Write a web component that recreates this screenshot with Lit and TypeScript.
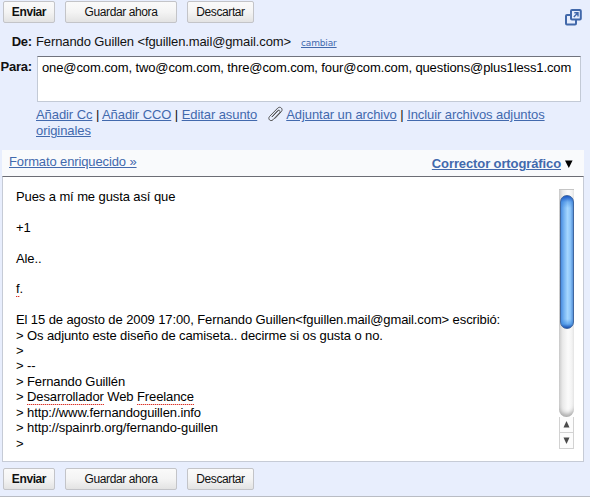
import { LitElement, html, css } from "lit";
import { customElement, property } from "lit/decorators.js";

@customElement("action-bar")
class ActionBar extends LitElement {
  static styles = css`
    :host { display: flex; gap: 10px; padding-left: 3px; }
    button {
      box-sizing: border-box; height: 22px; margin: 0; padding: 1px 0 0;
      border: 1px solid #c3c4c8; border-radius: 2px;
      background: linear-gradient(#fafafa, #f4f4f4 50%, #e3e3e3);
      font: 12px/19px "Liberation Sans", Arial, sans-serif; color: #111;
      white-space: nowrap;
    }
    .send { width: 52px; font-weight: bold; letter-spacing: -0.4px; }
    .save { width: 112px; letter-spacing: -0.4px; }
    .drop { width: 67px; letter-spacing: -0.4px; }
  `;
  render() {
    return html`
      <button class="send">Enviar</button>
      <button class="save">Guardar ahora</button>
      <button class="drop">Descartar</button>`;
  }
}

@customElement("message-editor")
class MessageEditor extends LitElement {
  @property({ attribute: false }) lines: unknown[] = [];
  static styles = css`
    :host {
      box-sizing: border-box; display: flex; justify-content: space-between;
      width: 582px; height: 286px; padding: 12px 9px 0 13px; background: #fff;
      border: 1px solid #c6cbd6; border-top-color: #6c6d75;
    }
    .text { font-size: 13px; line-height: 15.42px; letter-spacing: -0.1px; color: #000; white-space: pre; }
    .line { height: 15.42px; }
    .scroll { width: 15px; height: 260px; display: flex; flex-direction: column; }
    .track {
      box-sizing: border-box; height: 228px; padding: 5px 0 0 1px; border-top: 1px solid #c5c5c5;
      border-radius: 0 0 8px 8px;
      background: linear-gradient(90deg, #cfcfcf, #eaeaea 25%, #fbfbfb 60%, #f0f0f0);
      box-shadow: inset 0 -5px 4px -2px #aaa;
    }
    .thumb {
      box-sizing: border-box; width: 14px; height: 134px; border: 1px solid #40679f; border-radius: 7px;
      background:
        linear-gradient(#1956c4, #2f7ddc66 6px, transparent 12px, transparent 123px, #3385de88 128px, #174fb0),
        linear-gradient(90deg, #4b8ee0, #75b3f2 25%, #a5d7ff 55%, #8cc5fa 78%, #5792d8);
    }
    .arrow {
      box-sizing: border-box; height: 16px; border: 1px solid #d2d2d2; border-top: 0;
      display: flex; align-items: center; justify-content: center; background: #fcfcfc;
    }
    .arrow svg { display: block; }
    .typo {
      padding-bottom: 1px;
      background: repeating-linear-gradient(90deg, #d8342c 0 1px, #f6bdb8 1px 2px) 0 100% / 100% 1px no-repeat;
    }
  `;
  render() {
    return html`
      <div class="text">${this.lines.map((l) => html`<div class="line">${l}</div>`)}</div>
      <div class="scroll">
        <div class="track"><div class="thumb"></div></div>
        <div class="arrow"><svg width="7" height="7"><path d="M3.5 0L6.5 6.5H.5z" fill="#4a4a4a"/></svg></div>
        <div class="arrow"><svg width="7" height="7"><path d="M3.5 7L6.5 .5H.5z" fill="#4a4a4a"/></svg></div>
      </div>`;
  }
}

@customElement("app-root")
class AppRoot extends LitElement {
  static styles = css`
    :host {
      box-sizing: border-box; display: block; width: 590px; height: 500px; overflow: hidden;
      background: #fff; font: 13px/16px "Liberation Sans", Arial, sans-serif; color: #111;
    }
    .compose { box-sizing: border-box; height: 497px; padding-top: 1px; background: #e8eefd; border-bottom: 1px solid #b9bcc4; }
    .top { display: flex; justify-content: space-between; height: 32px; }
    .popout { margin: 8px 8px 0 0; display: block; }
    .row { display: flex; white-space: nowrap; }
    .label { width: 32px; padding-right: 4px; text-align: right; font-weight: bold; letter-spacing: -0.2px; }
    .from { height: 22px; padding-top: 1px; }
    .from .value { width: 265px; letter-spacing: -0.11px; }
    a { color: #4269ad; text-decoration: underline; }
    .change { font: 9px/18px "DejaVu Sans", sans-serif; letter-spacing: -0.15px; }
    .to .label { padding-top: 3px; }
    .box {
      box-sizing: border-box; width: 544px; height: 46px; margin-left: 1px; padding: 3px 4px; background: #fff;
      border: 1px solid #c3cad6; border-top-color: #70737d; letter-spacing: -0.11px; color: #000;
    }
    .options { margin: 4px 0 0 36px; width: 530px; height: 44px; line-height: 16px; letter-spacing: -0.08px; white-space: nowrap; }
    .clip { display: inline-block; vertical-align: -3px; margin: 0 2px 0 10px; }
    .tools {
      box-sizing: border-box; width: 582px; height: 26px; margin-left: 2px; padding: 4px 11px 0 7px; letter-spacing: -0.12px;
      display: flex; justify-content: space-between; background: #f9fafc;
    }
    .spell { padding-top: 2px; font-weight: bold; display: flex; gap: 4px; letter-spacing: -0.11px; }
    .caret { margin-top: 4px; display: block; }
    message-editor { margin: 0 0 6px 2px; }
  `;
  lines = [
    "Pues a mí me gusta así que", "", "+1", "", "Ale..", "",
    html`<span class="typo">f</span>.`, "",
    "El 15 de agosto de 2009 17:00, Fernando Guillen<fguillen.mail@gmail.com> escribió:",
    "> Os adjunto este diseño de camiseta.. decirme si os gusta o no.",
    ">", "> --", "> Fernando Guillén",
    html`> <span class="typo">Desarrollador</span> Web <span class="typo">Freelance</span>`,
    "> http://www.fernandoguillen.info", "> http://spainrb.org/fernando-guillen", ">",
  ];
  render() {
    return html`
      <div class="compose">
        <div class="top">
          <action-bar></action-bar>
          <svg class="popout" width="17" height="17" fill="none" stroke="#4168aa">
            <rect x="1" y="6" width="10" height="9.5" rx="1" stroke-width="2"/>
            <rect x="6" y="1" width="9.8" height="9.5" rx="1" fill="#e8eefd" stroke-width="2"/>
            <path d="M8.8 8L12.5 4.2M9.3 3.8H13V7.4" stroke-width="1.4"/>
          </svg>
        </div>
        <div class="row from">
          <div class="label">De:</div>
          <div class="value">Fernando Guillen &lt;fguillen.mail@gmail.com&gt;</div>
          <a class="change">cambiar</a>
        </div>
        <div class="row to">
          <div class="label">Para:</div>
          <div class="box">one@com.com, two@com.com, thre@com.com, four@com.com, questions@plus1less1.com</div>
        </div>
        <div class="options">
          <a>Añadir Cc</a> | <a>Añadir CCO</a> | <a>Editar asunto</a><svg class="clip" width="17" height="16" fill="none" stroke="#4a4a4a" stroke-linecap="round">
            <path d="M5.4 10.6L11.4 4.2M8 12.4L14.4 5.6C16.4 3 13.4-.2 10.8 2L2.6 10.4C.4 13 3.4 16 6 13.8L12.6 6.8C13.8 5.2 12.2 3.2 10.6 4.8L5 10.8" stroke-width=".95"/>
          </svg><a>Adjuntar un archivo</a> | <a>Incluir archivos adjuntos</a><br /><a>originales</a>
        </div>
        <div class="tools">
          <a>Formato enriquecido »</a>
          <div class="spell"><a>Corrector ortográfico</a><svg class="caret" width="8" height="8"><path d="M0 .5H7.6L3.8 8z" fill="#000"/></svg></div>
        </div>
        <message-editor .lines=${this.lines}></message-editor>
        <action-bar></action-bar>
      </div>`;
  }
}
